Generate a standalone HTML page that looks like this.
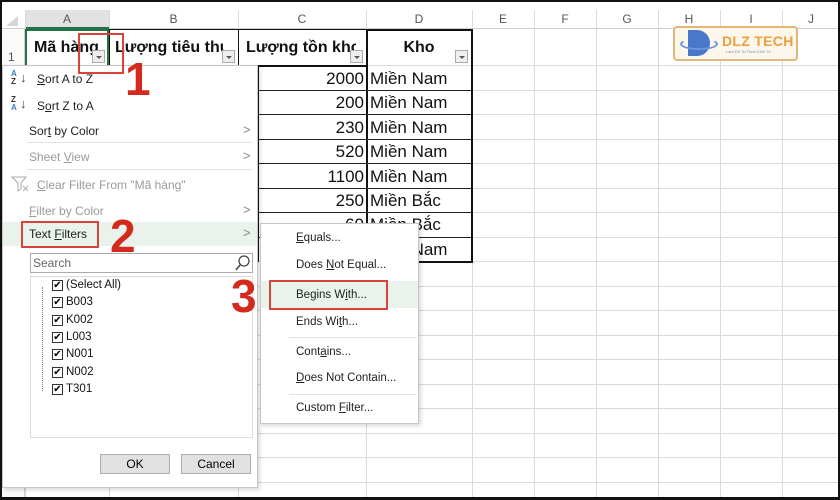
<!DOCTYPE html>
<html><head><meta charset="utf-8"><style>
*{margin:0;padding:0;box-sizing:border-box}
body{width:840px;height:500px;overflow:hidden;background:#fff;font-family:"Liberation Sans",sans-serif;position:relative}
.a{position:absolute}
.hl{position:absolute;left:25px;width:815px;height:1px;background:#dadada}
.vl{position:absolute;top:10px;width:1px;height:490px;background:#dadada}
.ch{position:absolute;top:10px;height:19px;font-size:12px;color:#555;text-align:center;line-height:19px}
.cell{position:absolute;font-size:17px;color:#111;line-height:24px;white-space:nowrap}
.hd{position:absolute;top:30px;height:35px;font-size:16px;font-weight:bold;line-height:35px;color:#111;white-space:nowrap;overflow:hidden}
.dd{position:absolute;width:13px;height:13px;border:1px solid #aaa;background:#eee}
.dd:after{content:"";position:absolute;left:3px;top:5px;border-left:3px solid transparent;border-right:3px solid transparent;border-top:3px solid #555}
.mi{position:absolute;left:29px;font-size:12px;color:#222;white-space:nowrap}
.gr{color:#9a9a9a}
.arr{position:absolute;left:243px;font-size:13px;color:#888}
.si{position:absolute;left:296px;font-size:11.5px;color:#222}
.num{position:absolute;font-size:46px;line-height:46px;font-weight:bold;color:#d42a1e;font-family:"Liberation Sans",sans-serif}
.red{position:absolute;border:2px solid #d9443a}
.ck{position:absolute;left:52px;width:11px;height:11px;border:1px solid #333;background:#fff;font-size:10px;line-height:9px;text-align:center}
.cl{position:absolute;left:66px;font-size:11.5px;color:#111}
</style></head><body>
<div class="a" style="left:0;top:10px;width:840px;height:19px;background:#fff;border-bottom:1px solid #cfcfcf"></div>
<div class="a" style="left:25px;top:10px;width:84px;height:19px;background:#e2e2e2;border-bottom:2px solid #217346"></div>
<div class="a" style="left:6px;top:16px;border-left:12px solid transparent;border-bottom:10px solid #d6d6d6"></div>
<div class="ch" style="left:25px;width:84px">A</div>
<div class="ch" style="left:109px;width:129px">B</div>
<div class="ch" style="left:238px;width:128px">C</div>
<div class="ch" style="left:366px;width:106px">D</div>
<div class="ch" style="left:472px;width:62px">E</div>
<div class="ch" style="left:534px;width:62px">F</div>
<div class="ch" style="left:596px;width:62px">G</div>
<div class="ch" style="left:658px;width:62px">H</div>
<div class="ch" style="left:720px;width:62px">I</div>
<div class="ch" style="left:782px;width:58px">J</div>
<div class="vl" style="left:25px"></div><div class="vl" style="left:109px"></div><div class="vl" style="left:238px"></div><div class="vl" style="left:366px"></div><div class="vl" style="left:472px"></div><div class="vl" style="left:534px"></div><div class="vl" style="left:596px"></div><div class="vl" style="left:658px"></div><div class="vl" style="left:720px"></div><div class="vl" style="left:782px"></div>
<div class="a" style="left:0;top:29px;width:25px;height:471px;background:#fafafa;border-right:1px solid #cfcfcf"></div>
<div class="a" style="left:8px;top:50px;font-size:12px;color:#555">1</div>
<div class="hl" style="top:65px"></div>
<div class="hl" style="top:90px"></div><div class="hl" style="top:114px"></div><div class="hl" style="top:139px"></div><div class="hl" style="top:163px"></div><div class="hl" style="top:188px"></div><div class="hl" style="top:212px"></div><div class="hl" style="top:237px"></div><div class="hl" style="top:261px"></div><div class="hl" style="top:286px"></div><div class="hl" style="top:310px"></div><div class="hl" style="top:335px"></div><div class="hl" style="top:359px"></div><div class="hl" style="top:384px"></div><div class="hl" style="top:408px"></div><div class="hl" style="top:433px"></div><div class="hl" style="top:457px"></div><div class="hl" style="top:482px"></div>
<div class="a" style="left:25px;top:29px;width:84px;height:36px;border:2px solid #217346;border-bottom:none"></div>
<div class="a" style="left:109px;top:29px;width:258px;height:1px;background:#111"></div>
<div class="a" style="left:109px;top:65px;width:258px;height:2px;background:#111"></div>
<div class="a" style="left:238px;top:29px;width:1px;height:36px;background:#111"></div>
<div class="a" style="left:109px;top:29px;width:1px;height:36px;background:#111"></div>
<div class="hd" style="left:34px;width:75px">Mã hàng</div>
<div class="hd" style="left:115px;width:110px">Lượng tiêu thụ</div>
<div class="hd" style="left:246px;width:110px">Lượng tồn kho</div>
<div class="hd" style="left:366px;width:106px;text-align:center">Kho</div>
<div class="dd" style="left:92px;top:50px"></div>
<div class="dd" style="left:222px;top:50px"></div>
<div class="dd" style="left:350px;top:50px"></div>
<div class="dd" style="left:455px;top:50px"></div>
<div class="a" style="left:366px;top:29px;width:107px;height:234px;border:2px solid #111"></div>
<div class="a" style="left:258px;top:65px;width:108px;height:197px;border-left:1px solid #111"></div>
<div class="a" style="left:258px;top:90px;width:108px;height:1px;background:#222"></div>
<div class="a" style="left:258px;top:114px;width:108px;height:1px;background:#222"></div>
<div class="a" style="left:258px;top:139px;width:108px;height:1px;background:#222"></div>
<div class="a" style="left:258px;top:163px;width:108px;height:1px;background:#222"></div>
<div class="a" style="left:258px;top:188px;width:108px;height:1px;background:#222"></div>
<div class="a" style="left:258px;top:212px;width:108px;height:1px;background:#222"></div>
<div class="a" style="left:258px;top:237px;width:108px;height:1px;background:#222"></div>
<div class="a" style="left:366px;top:90px;width:106px;height:1px;background:#222"></div><div class="a" style="left:366px;top:114px;width:106px;height:1px;background:#222"></div><div class="a" style="left:366px;top:139px;width:106px;height:1px;background:#222"></div><div class="a" style="left:366px;top:163px;width:106px;height:1px;background:#222"></div><div class="a" style="left:366px;top:188px;width:106px;height:1px;background:#222"></div><div class="a" style="left:366px;top:212px;width:106px;height:1px;background:#222"></div><div class="a" style="left:366px;top:237px;width:106px;height:1px;background:#222"></div>
<div class="cell" style="left:260px;top:67px;width:104px;text-align:right">2000</div><div class="cell" style="left:370px;top:67px">Miền Nam</div>
<div class="cell" style="left:260px;top:91px;width:104px;text-align:right">200</div><div class="cell" style="left:370px;top:91px">Miền Nam</div>
<div class="cell" style="left:260px;top:116px;width:104px;text-align:right">230</div><div class="cell" style="left:370px;top:116px">Miền Nam</div>
<div class="cell" style="left:260px;top:140px;width:104px;text-align:right">520</div><div class="cell" style="left:370px;top:140px">Miền Nam</div>
<div class="cell" style="left:260px;top:165px;width:104px;text-align:right">1100</div><div class="cell" style="left:370px;top:165px">Miền Nam</div>
<div class="cell" style="left:260px;top:189px;width:104px;text-align:right">250</div><div class="cell" style="left:370px;top:189px">Miền Bắc</div>
<div class="cell" style="left:260px;top:213px;width:104px;text-align:right">60</div><div class="cell" style="left:370px;top:213px">Miền Bắc</div>
<div class="cell" style="left:370px;top:238px">Miền Nam</div>
<!-- logo -->
<div class="a" style="left:673px;top:26px;width:125px;height:35px;background:#fdf6ea;border:2px solid #e2b77a;border-radius:4px"></div>
<div class="a" style="left:688px;top:30px;width:22px;height:26px;background:#4a78c8;border-radius:0 13px 13px 0"></div>
<div class="a" style="left:680px;top:38px;width:38px;height:12px;border:2px solid #6b95da;border-radius:50%;border-top-color:transparent"></div>
<div class="a" style="left:722px;top:33px;font-size:14px;font-weight:bold;color:#e8a040;letter-spacing:0.3px">DLZ TECH</div>
<div class="a" style="left:726px;top:49px;font-size:4px;color:#7a8fb8">Làm Đủ Tri Thức Kinh Tế</div>
<!-- menu -->
<div class="a" style="left:2px;top:65px;width:256px;height:423px;background:#fff;border:1px solid #c6c6c6;box-shadow:2px 2px 4px rgba(0,0,0,.15)"></div>
<div class="a" style="left:11px;top:70px;font-size:8px;line-height:8px;color:#3a80c0;font-weight:bold">A<br><span style="color:#333">Z</span></div><div class="a" style="left:20px;top:70px;font-size:13px;color:#444">↓</div>
<div class="mi" style="left:37px;top:72px"><u>S</u>ort A to Z</div>
<div class="a" style="left:11px;top:96px;font-size:8px;line-height:8px;color:#333;font-weight:bold">Z<br><span style="color:#3a80c0">A</span></div><div class="a" style="left:20px;top:96px;font-size:13px;color:#444">↓</div>
<div class="mi" style="left:37px;top:99px">S<u>o</u>rt Z to A</div>
<div class="mi" style="top:124px">Sor<u>t</u> by Color</div><div class="arr" style="top:122px">&gt;</div>
<div class="a" style="left:27px;top:142px;width:225px;height:1px;background:#e2e2e2"></div>
<div class="mi gr" style="top:150px">Sheet <u>V</u>iew</div><div class="arr" style="top:148px">&gt;</div>
<div class="a" style="left:27px;top:169px;width:225px;height:1px;background:#e2e2e2"></div>
<svg class="a" style="left:11px;top:176px" width="20" height="16"><path d="M1 1h14l-5 6v6l-3 2V7z" fill="none" stroke="#aaa"/><path d="M12 10l5 5M17 10l-5 5" stroke="#aaa"/></svg>
<div class="mi gr" style="left:37px;top:178px"><u>C</u>lear Filter From "Mã hàng"</div>
<div class="mi gr" style="top:204px"><u>F</u>ilter by Color</div><div class="arr" style="top:202px">&gt;</div>
<div class="a" style="left:3px;top:222px;width:254px;height:24px;background:#eaf2ec"></div>
<div class="mi" style="top:227px">Text <u>F</u>ilters</div><div class="arr" style="top:225px">&gt;</div>
<div class="red" style="left:21px;top:221px;width:78px;height:27px"></div>
<div class="num" style="left:110px;top:213px">2</div>
<div class="num" style="left:125px;top:56px">1</div>
<div class="red" style="left:78px;top:33px;width:46px;height:41px"></div>
<div class="a" style="left:30px;top:253px;width:223px;height:20px;border:1px solid #ababab"></div>
<div class="a" style="left:33px;top:256px;font-size:12px;color:#666">Search</div>
<svg class="a" style="left:235px;top:254px" width="16" height="17"><circle cx="9" cy="7" r="5" fill="none" stroke="#444" stroke-width="1.3"/><path d="M5 11l-4 5" stroke="#444" stroke-width="1.5"/></svg>
<div class="a" style="left:30px;top:276px;width:223px;height:162px;border:1px solid #dcdcdc"></div>
<div class="a" style="left:42px;top:287px;width:1px;height:104px;border-left:1px dotted #888"></div>
<div class="ck" style="top:280px">✔</div><div class="cl" style="top:279px">(Select All)</div>
<div class="ck" style="top:297px">✔</div><div class="cl" style="top:296px">B003</div>
<div class="ck" style="top:315px">✔</div><div class="cl" style="top:314px">K002</div>
<div class="ck" style="top:332px">✔</div><div class="cl" style="top:331px">L003</div>
<div class="ck" style="top:349px">✔</div><div class="cl" style="top:348px">N001</div>
<div class="ck" style="top:367px">✔</div><div class="cl" style="top:366px">N002</div>
<div class="ck" style="top:384px">✔</div><div class="cl" style="top:383px">T301</div>
<div class="a" style="left:100px;top:454px;width:70px;height:20px;background:#e1e1e1;border:1px solid #adadad;font-size:12px;text-align:center;line-height:18px">OK</div>
<div class="a" style="left:181px;top:454px;width:70px;height:20px;background:#e1e1e1;border:1px solid #adadad;font-size:12px;text-align:center;line-height:18px">Cancel</div>
<!-- submenu -->
<div class="a" style="left:260px;top:223px;width:159px;height:201px;background:#fff;border:1px solid #c6c6c6;box-shadow:2px 2px 4px rgba(0,0,0,.15)"></div>
<div class="si" style="top:232px"><u>E</u>quals...</div>
<div class="si" style="top:259px">Does <u>N</u>ot Equal...</div>
<div class="a" style="left:261px;top:281px;width:157px;height:27px;background:#eaf2ec"></div>
<div class="si" style="top:289px">Begins W<u>i</u>th...</div>
<div class="red" style="left:269px;top:280px;width:119px;height:30px"></div>
<div class="num" style="left:231px;top:273px">3</div>
<div class="si" style="top:316px">Ends Wi<u>t</u>h...</div>
<div class="a" style="left:289px;top:337px;width:128px;height:1px;background:#e2e2e2"></div>
<div class="si" style="top:346px">Cont<u>a</u>ins...</div>
<div class="si" style="top:372px"><u>D</u>oes Not Contain...</div>
<div class="a" style="left:289px;top:394px;width:128px;height:1px;background:#e2e2e2"></div>
<div class="si" style="top:402px">Custom <u>F</u>ilter...</div>
<div class="a" style="left:0;top:0;width:840px;height:500px;border:2px solid #111;border-bottom-width:3px"></div>
</body></html>
